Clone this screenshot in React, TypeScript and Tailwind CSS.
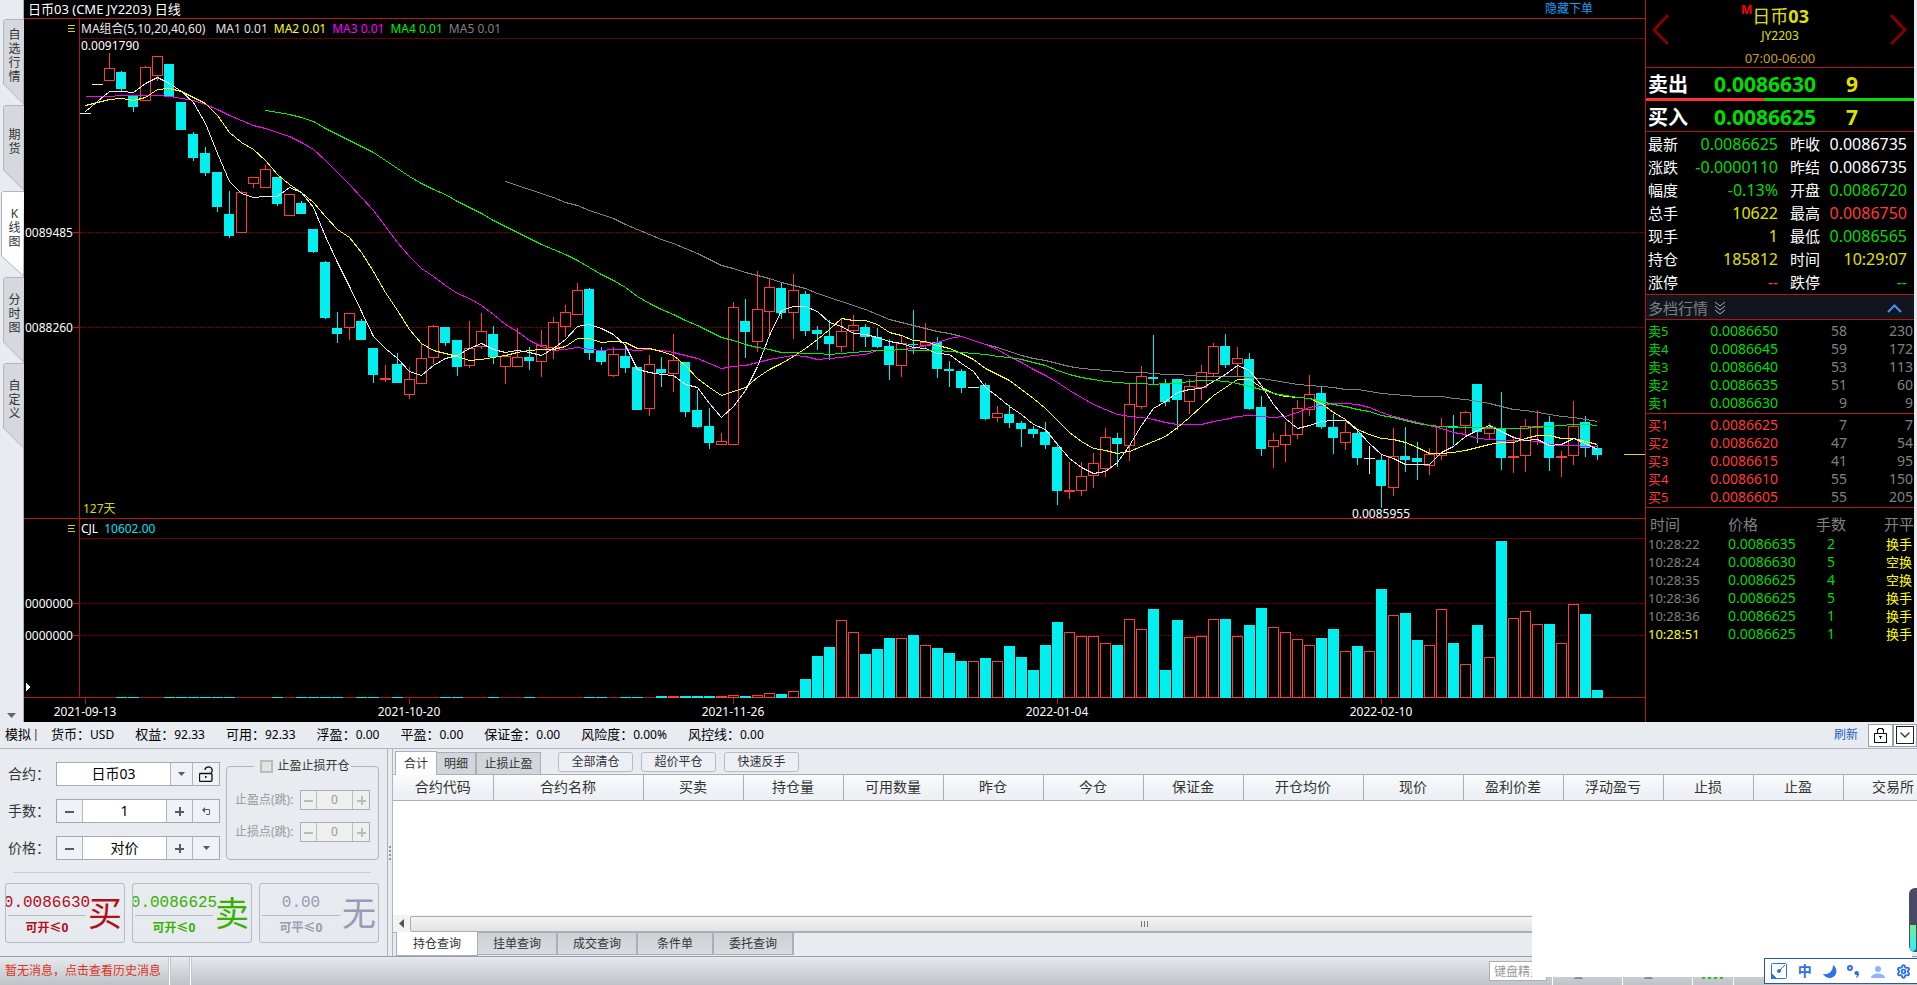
import React from 'react';
import { ChevronDown, Settings } from 'lucide-react';

type Kind = 'up' | 'down' | 'flat';
type Candle = [kind: Kind, high: number, top: number, bottom: number, low: number];

const STEP = 12;
const FIRST_X = 61;
const PRICE_TOP = 39;
const PRICE_HEIGHT = 479;
const VOLUME_HEIGHT = 159;

// u = rising, d = falling, f = unchanged; then high, body top, body bottom, low
const RAW = `f 113 113 113 113|f 84 84 84 84|u 53 68 80 80|d 71 72 89 91|d 95 96 107 112|u 66 67 100 100|u 56 56 75 81|d 64 64 97 97|d 102 102 130 130|d 132 134 158 161
d 147 153 173 176|d 172 172 207 212|d 191 214 236 238|u 191 192 232 232|u 177 177 183 188|u 165 169 187 187|d 177 177 204 206|u 194 194 215 215|d 201 203 214 214|d 229 229 252 253
d 261 262 318 319|d 312 328 334 343|u 313 313 327 340|d 319 321 340 340|d 348 348 375 383|u 365 378 379 382|d 353 364 383 383|u 367 379 394 399|u 343 358 383 383|u 325 326 357 364
d 327 327 343 346|d 340 340 367 376|u 321 348 365 368|u 313 331 346 349|d 326 334 357 364|u 356 356 366 384|u 328 357 366 366|d 347 357 361 370|u 330 345 361 377|u 317 322 347 359
u 305 312 326 337|u 283 290 314 314|d 288 289 353 360|d 347 351 362 365|u 347 354 375 377|d 344 356 368 373|d 367 367 410 410|u 355 364 408 416|d 357 369 373 387|u 334 360 373 392
d 362 362 412 417|d 390 410 427 428|d 408 426 443 449|u 433 441 444 444|u 302 307 444 444|d 299 321 332 358|u 271 309 341 352|u 278 287 311 335|d 283 288 313 319|u 274 290 312 339
d 291 294 331 336|d 326 330 334 350|d 320 336 344 360|u 319 331 346 352|u 315 325 330 351|d 324 327 337 347|d 328 337 347 348|d 339 346 365 380|u 335 343 365 377|d 310 344 345 354
u 323 342 345 348|d 337 342 369 378|d 361 369 371 387|d 369 371 388 393|f 387 387 387 387|d 383 385 419 420|u 406 413 417 422|d 405 414 423 428|d 421 423 429 447|d 426 429 434 438
d 422 432 445 449|d 443 447 491 505|u 462 490 491 499|u 462 476 490 496|u 453 463 475 488|u 428 437 468 477|d 433 438 444 467|u 384 404 445 461|u 366 376 406 409|d 335 377 379 384
d 379 383 402 406|d 379 379 400 430|u 379 386 401 414|u 365 372 387 400|u 343 346 373 376|d 334 346 365 368|u 347 358 363 376|d 353 359 409 410|d 396 407 449 456|u 433 440 446 468
u 422 435 444 462|u 400 408 434 439|u 375 394 409 416|d 387 393 427 429|d 414 427 438 454|u 422 432 442 450|d 430 433 458 465|f 446 458 458 474|d 454 460 486 508|u 428 456 487 496
d 427 456 460 472|d 442 458 462 480|u 448 454 465 475|u 418 426 455 460|d 415 426 427 445|u 411 412 425 436|d 384 384 432 443|u 423 428 433 439|d 392 428 458 470|u 436 456 457 473
u 419 426 455 472|u 410 426 427 445|d 416 422 458 471|u 451 456 457 477|u 401 426 455 465|d 416 422 448 457|d 445 448 455 460`;

const KINDS: Record<string, Kind> = { u: 'up', d: 'down', f: 'flat' };

const CANDLES: Candle[] = RAW.split(/[|\n]/).map((row) => {
  const [k, ...n] = row.trim().split(' ');
  return [KINDS[k], ...n.map(Number)] as Candle;
});

// Bar heights from VOLUME_START on; earlier ones are only a pixel high
const VOLUME_START = 48;
const VOLUMES = [
  1, 1, 1, 1, 1, 1, 2, 1, 2, 4, 3, 6, 18, 41, 50, 77, 65, 43, 48, 59, 59, 62, 52, 49, 44, 36, 36, 39, 36, 51, 40, 27, 52,
  75, 65, 61, 61, 54, 52, 78, 68, 88, 27, 77, 60, 61, 78, 78, 61, 72, 89, 70, 65, 58, 52, 59, 68, 46, 51, 46, 108, 82,
  84, 57, 52, 88, 54, 33, 72, 40, 156, 79, 86, 73, 73, 54, 93, 83, 7,
];

// Averages need bars older than the first one on screen, so each line is seeded
const AVERAGES = [
  { period: 60, start: 35, color: '#808080', seed: [181, 185, 189, 193, 197, 202, 205, 210, 214, 218, 224, 229, 234, 239, 243, 248, 253, 259, 265, 268, 272, 275, 278, 282] },
  { period: 20, start: 0, color: '#ff00ff', seed: [96, 96, 96, 95, 95, 95, 95, 96, 98, 100, 104, 109, 115, 120, 125, 128, 132, 136, 142] },
  { period: 10, start: 0, color: '#ffff00', seed: [105, 102, 99, 98, 100, 97, 89, 88, 91] },
  { period: 5, start: 0, color: '#e8e8e8', seed: [111, 101, 91, 91] },
  { period: 40, start: 15, color: '#00f000', seed: [110, 112, 114, 117, 121, 128, 134, 140, 146, 152, 160, 168, 176, 183, 189, 194, 201, 207, 213, 220, 226, 232, 238, 244] },
];

const CLOSES = CANDLES.map(([kind, , top, bottom]) => (kind === 'down' ? bottom : top));
const barX = (i: number) => FIRST_X + i * STEP;

const averagePoints = (period: number, start: number, seed: number[]) => {
  const points: string[] = [];
  for (let i = start; i < CLOSES.length; i++) {
    const y =
      i - start < seed.length
        ? seed[i - start]
        : CLOSES.slice(i - period + 1, i + 1).reduce((a, b) => a + b, 0) / period;
    points.push(`${barX(i)},${Math.round(y)}`);
  }
  return points.join(' ');
};

const CandleShape = ({ candle, x }: { candle: Candle; x: number }) => {
  const [kind, high, top, bottom, low] = candle;
  if (kind === 'down') {
    return (
      <g fill="#00f0f0">
        <rect x={x} y={high} width="1" height={low - high} />
        <rect x={x - 5} y={top} width="10" height={bottom - top} />
      </g>
    );
  }
  if (kind === 'flat') {
    return (
      <g fill="#e8e8e8">
        <rect x={x} y={high} width="1" height={low - high} />
        <rect x={x - 5} y={top} width="11" height="1" />
      </g>
    );
  }
  return (
    <g fill="#ff3a3a">
      <rect x={x} y={high} width="1" height={top - high} />
      <rect x={x} y={bottom} width="1" height={low - bottom} />
      <rect x={x - 4.5} y={top + 0.5} width="10" height={bottom - top} fill="none" stroke="#ff3a3a" />
    </g>
  );
};

const GridLine = ({ y, label }: { y: number; label: string }) => (
  <>
    <line x1="56" x2="100%" y1={y + 0.5} y2={y + 0.5} stroke="#700000" strokeDasharray="3 1" />
    <line x1="49" x2="56" y1={y + 0.5} y2={y + 0.5} stroke="#b81410" />
    <text x="49" y={y + 5} textAnchor="end" fill="#fff" fontSize="12">{label}</text>
  </>
);

const PricePane = () => (
  <svg className="block w-full overflow-visible" height={PRICE_HEIGHT} shapeRendering="crispEdges">
    <GridLine y={193} label="0089485" />
    <GridLine y={288} label="0088260" />
    <line x1="55.5" x2="55.5" y1="0" y2={PRICE_HEIGHT} stroke="#b81410" />
    <g transform={`translate(0 ${-PRICE_TOP})`}>
      {CANDLES.map((candle, i) => (
        <CandleShape key={i} candle={candle} x={barX(i)} />
      ))}
      {AVERAGES.map((a) => (
        <polyline key={a.period} points={averagePoints(a.period, a.start, a.seed)} fill="none" stroke={a.color} transform="translate(0.5 0.5)" />
      ))}
    </g>
    <text x="57" y="11" fill="#fff" fontSize="12">0.0091790</text>
    <text x={barX(108)} y="479" fill="#fff" fontSize="12" textAnchor="middle">0.0085955</text>
    <text x="59" y="474" fill="#d8d800" fontSize="12">127天</text>
    <svg x="100%" y="415" overflow="visible">
      <rect x="-21" width="21" height="1" fill="#e0e000" />
    </svg>
  </svg>
);

const VolumePane = () => (
  <svg className="block w-full" height={VOLUME_HEIGHT} shapeRendering="crispEdges">
    <GridLine y={64} label="0000000" />
    <GridLine y={96} label="0000000" />
    <line x1="55.5" x2="55.5" y1="0" y2="158" stroke="#b81410" />
    <line x1="0" x2="100%" y1="158.5" y2="158.5" stroke="#b81410" />
    {CANDLES.map(([kind], i) => {
      const height = i < VOLUME_START ? 0 : VOLUMES[i - VOLUME_START];
      const x = barX(i);
      return kind === 'down' ? (
        <rect key={i} x={x - 5} y={158 - height} width="11" height={height + 1} fill="#00f0f0" />
      ) : (
        <rect key={i} x={x - 4.5} y={158.5 - height} width="10" height={height} fill="#000" stroke="#ff3a3a" />
      );
    })}
    <path d="M2 144v8l5-4z" fill="#fff" />
  </svg>
);

const DATES = ['2021-09-13', '2021-10-20', '2021-11-26', '2022-01-04', '2022-02-10'];

const DateAxis = () => (
  <svg className="block w-full" height="24">
    {DATES.map((date, i) => (
      <g key={date}>
        <rect x={barX(i * 27)} width="1" height="6" fill="#b81410" />
        <text x={barX(i * 27)} y="18" fill="#fff" fontSize="12" textAnchor="middle">{date}</text>
      </g>
    ))}
  </svg>
);

const Bars = () => (
  <svg width="7" height="8" shapeRendering="crispEdges" fill="#d8d800">
    <rect width="7" height="1" />
    <rect y="3" width="6" height="1" />
    <rect y="6" width="7" height="1" />
  </svg>
);

const PaneHeader = ({ children }: { children: React.ReactNode }) => (
  <div className="flex h-5 items-stretch text-xs">
    <div className="flex w-14 shrink-0 items-center justify-end border-r border-[#b81410] pr-1">
      <Bars />
    </div>
    <div className="flex flex-1 items-center gap-1.5 whitespace-nowrap border-b border-[#6b0000] pl-px">{children}</div>
  </div>
);

const ChartSection = () => (
  <section className="min-w-0 flex-1 overflow-hidden bg-black text-white">
    <header className="flex h-[19px] items-center justify-between border-b border-[#b81410] pl-1 pr-13 text-xs">
      <h1 className="text-[13px] leading-4">日币03 (CME JY2203) 日线</h1>
      <a href="#order" className="text-[#1e9bf0]">隐藏下单</a>
    </header>
    <PaneHeader>
      <span className="mr-1 text-[#e8e8e8]">MA组合(5,10,20,40,60)</span>
      <span className="text-[#e0e0e0]">MA1 0.01</span>
      <span className="text-[#ffff00]">MA2 0.01</span>
      <span className="text-[#ff00ff]">MA3 0.01</span>
      <span className="text-[#00f000]">MA4 0.01</span>
      <span className="text-[#808080]">MA5 0.01</span>
    </PaneHeader>
    <PricePane />
    <div className="border-t border-[#b81410]">
      <PaneHeader>
        <span>CJL</span>
        <span className="text-[#00e0f0]">10602.00</span>
      </PaneHeader>
    </div>
    <VolumePane />
    <DateAxis />
  </section>
);

const SIDE_TABS = ['自选行情', '期货', 'K线图', '分时图', '自定义'];

const Sidebar = () => (
  <nav className="flex w-6 shrink-0 flex-col border-r border-[#a9b0ba] bg-[#e8ecf1] pt-[19px]">
    {SIDE_TABS.map((tab) => {
      const active = tab === 'K线图';
      return (
        <button key={tab} type="button" className="relative flex h-[86px] w-full items-center justify-center pb-3 pl-1.5 text-xs leading-[14px] text-[#333]">
          <svg className="absolute inset-0" width="24" height="86">
            <path
              d={active ? 'M24 .5H3L1.500 2V65L23 84.500' : 'M24 .5H5L3.500 2V65L23 84.500'}
              fill={active ? '#fff' : '#d5d8dd'}
              stroke="#b0b6be"
            />
          </svg>
          <span className="relative w-3 break-all text-center">{tab}</span>
        </button>
      );
    })}
    <svg className="mx-auto mt-auto mb-1" width="9" height="6"><path d="M0 1h9L4.500 6z" fill="#666" /></svg>
  </nav>
);

const GREEN = 'text-[#00dc00]';
const YELLOW = 'text-[#e0e000]';
const RED = 'text-[#ff3a3a]';

const STATS = [
  ['最新', '0.0086625', GREEN, '昨收', '0.0086735', 'text-white'],
  ['涨跌', '-0.0000110', GREEN, '昨结', '0.0086735', 'text-white'],
  ['幅度', '-0.13%', GREEN, '开盘', '0.0086720', GREEN],
  ['总手', '10622', YELLOW, '最高', '0.0086750', RED],
  ['现手', '1', YELLOW, '最低', '0.0086565', GREEN],
  ['持仓', '185812', YELLOW, '时间', '10:29:07', YELLOW],
  ['涨停', '--', RED, '跌停', '--', GREEN],
];

const SELLS = [
  ['卖5', '0.0086650', '58', '230'],
  ['卖4', '0.0086645', '59', '172'],
  ['卖3', '0.0086640', '53', '113'],
  ['卖2', '0.0086635', '51', '60'],
  ['卖1', '0.0086630', '9', '9'],
];

const BUYS = [
  ['买1', '0.0086625', '7', '7'],
  ['买2', '0.0086620', '47', '54'],
  ['买3', '0.0086615', '41', '95'],
  ['买4', '0.0086610', '55', '150'],
  ['买5', '0.0086605', '55', '205'],
];

const TRADES = [
  ['10:28:22', '0.0086635', '2', '换手'],
  ['10:28:24', '0.0086630', '5', '空换'],
  ['10:28:35', '0.0086625', '4', '空换'],
  ['10:28:36', '0.0086625', '5', '换手'],
  ['10:28:36', '0.0086625', '1', '换手'],
  ['10:28:51', '0.0086625', '1', '换手'],
];

const DepthTable = ({ rows, color }: { rows: string[][]; color: string }) => (
  <div className="border-b border-[#b81410] pt-0.5 pb-px">
    <table className="w-full table-fixed text-right text-sm">
      <tbody>
        {rows.map(([name, price, lots, total]) => (
          <tr key={name} className="h-[18px] leading-[18px] text-[#808080]">
            <th scope="row" className={`w-10 pl-0.5 text-left text-[13px] font-normal ${color}`}>{name}</th>
            <td className={`w-[92px] ${color}`}>{price}</td>
            <td className="w-[69px]">{lots}</td>
            <td className="pr-px">{total}</td>
          </tr>
        ))}
      </tbody>
    </table>
  </div>
);

const QuoteRow = ({ label, price, lots }: { label: string; price: string; lots: number }) => (
  <div className="flex h-[30px] items-center pl-0.5 pt-[3px] font-bold">
    <span className="w-[66px] text-xl text-white">{label}</span>
    <span className={`w-[132px] text-[21px] ${GREEN}`}>{price}</span>
    <span className={`text-[21px] ${YELLOW}`}>{lots}</span>
  </div>
);

const QuotePanel = () => (
  <aside className="w-[269px] shrink-0 overflow-hidden border-l border-[#b81410] bg-black">
    <header className="flex h-[68px] justify-between border-b border-[#b81410] px-1.5 pt-3.5">
      <button type="button" aria-label="上一个" className="h-8">
        <svg width="18" height="32" fill="none" stroke="#850000" strokeWidth="3"><path d="M16 1L2 16L16 30" /></svg>
      </button>
      <div className="-mt-2.5 flex flex-col items-center">
        <h2 className={`flex h-6 items-center pr-2.5 text-lg ${YELLOW}`}>
          <sup className="text-xs font-bold text-[#ff0000]">M</sup>日币<b>03</b>
        </h2>
        <p className={`h-4 text-xs leading-4 ${YELLOW}`}>JY2203</p>
        <p className="mt-1 text-[13px] leading-5 text-[#c8a028]">07:00-06:00</p>
      </div>
      <button type="button" aria-label="下一个" className="h-8">
        <svg width="18" height="32" fill="none" stroke="#850000" strokeWidth="3"><path d="M1 1L15 16L1 30" /></svg>
      </button>
    </header>
    <QuoteRow label="卖出" price="0.0086630" lots={9} />
    <div className="flex h-[3px]">
      <div className="w-[44%] bg-[#ff3030]" />
      <div className="flex-1 bg-[#00dc00]" />
    </div>
    <QuoteRow label="买入" price="0.0086625" lots={7} />
    <dl className="border-y border-[#b81410] pt-px text-base leading-[23px]">
      {STATS.map(([l1, v1, c1, l2, v2, c2]) => (
        <div key={l1} className="flex h-[23px] pl-0.5 pr-[7px]">
          <dt className="w-9 text-[15px] text-white">{l1}</dt>
          <dd className={`w-[94px] text-right ${c1}`}>{v1}</dd>
          <dt className="ml-3 w-9 text-[15px] text-white">{l2}</dt>
          <dd className={`flex-1 text-right ${c2}`}>{v2}</dd>
        </div>
      ))}
    </dl>
    <button type="button" className="flex h-[25px] w-full items-center border-b border-[#b81410] bg-[#11161e] pl-0.5 pr-3 pt-0.5 text-[15px] text-[#808080]">
      多档行情
      <svg className="ml-1.5" width="12" height="14" fill="none" stroke="#b0b0b0"><path d="M1 1l5 4l5-4M1 5l5 4l5-4M1 9l5 4l5-4" /></svg>
      <svg className="ml-auto" width="15" height="9" fill="none" stroke="#4a90f0" strokeWidth="2"><path d="M1 8l6.500-6.500L14 8" /></svg>
    </button>
    <DepthTable rows={SELLS} color={GREEN} />
    <DepthTable rows={BUYS} color={RED} />
    <table className="mt-[5px] w-full table-fixed text-left text-sm">
      <thead>
        <tr className="h-[22px] text-[15px] leading-5 text-[#808080]">
          <th className="w-[82px] pl-1 font-normal">时间</th>
          <th className="w-[68px] font-normal">价格</th>
          <th className="w-[70px] text-center font-normal">手数</th>
          <th className="text-right font-normal">开平</th>
        </tr>
      </thead>
      <tbody>
        {TRADES.map(([time, price, lots, type], i) => (
          <tr key={i} className={`h-[18px] leading-[18px] ${GREEN}`}>
            <td className={`pl-0.5 text-[13px] ${i === TRADES.length - 1 ? 'text-[#ffff00]' : 'text-[#808080]'}`}>{time}</td>
            <td>{price}</td>
            <td className="text-center">{lots}</td>
            <td className="pr-0.5 text-right text-[13px] text-[#ffff00]">{type}</td>
          </tr>
        ))}
      </tbody>
    </table>
  </aside>
);

const ACCOUNT = [
  ['货币', 'USD'],
  ['权益', '92.33'],
  ['可用', '92.33'],
  ['浮盈', '0.00'],
  ['平盈', '0.00'],
  ['保证金', '0.00'],
  ['风险度', '0.00%'],
  ['风控线', '0.00'],
];

const LockIcon = () => (
  <svg width="13" height="16" fill="none" stroke="#111" shapeRendering="crispEdges">
    <path d="M1 6.500h11l.5.5v8l-.5.5H1l-.5-.5V7zM3.500 6V3l2-2h2l2 2v3" />
    <path d="M5 9h3v1H7v2H6v-2H5z" fill="#111" stroke="none" />
  </svg>
);

const LockOpenIcon = () => (
  <svg width="15" height="16" fill="none" stroke="#111">
    <path d="M1 7.500h11l1 1v6l-1 1H1l-.5-1v-6z" strokeWidth="1.300" />
    <path d="M6 4c0-2 2-3.200 4-3.200c2 .2 3.500 2 3.200 3.700c0 1-.7 2-1.200 3" strokeWidth="1.300" />
    <path d="M6 10h1.500v2H6z" fill="#111" stroke="none" />
  </svg>
);

const AccountBar = () => (
  <div className="flex h-[27px] items-center border-b border-[#b0b5bd] text-[13px] text-black">
    <span className="pl-[5px]">模拟</span>
    <span className="ml-1 mr-3.5 h-3 w-0.5 border-l border-[#5a8ab8] bg-[#e0a050]" />
    <dl className="flex gap-[21px]">
      {ACCOUNT.map(([label, value]) => (
        <div key={label} className="flex items-center">
          <dt>{label}：</dt>
          <dd className="text-xs">{value}</dd>
        </div>
      ))}
    </dl>
    <a href="#refresh" className="ml-auto mr-2.5 text-xs text-[#1f5fc0]">刷新</a>
    <button type="button" aria-label="锁定" className="flex h-[23px] w-[25px] items-center justify-center border border-[#9aa0aa] bg-white">
      <LockIcon />
    </button>
    <button type="button" aria-label="收起" className="flex h-[23px] w-6 items-center justify-center border border-[#9aa0aa] bg-white">
      <span className="flex size-[18px] items-center justify-center border border-[#222]"><ChevronDown size={18} strokeWidth={2} color="#333" /></span>
    </button>
  </div>
);

const BTN = 'flex items-center justify-center bg-[#eff2f6] text-[#555]';

const Caret = () => (
  <svg width="7" height="4"><path d="M0 0h7L3.500 4z" fill="#555b66" /></svg>
);

const Sign = ({ plus, color = '#555b66' }: { plus?: boolean; color?: string }) => (
  <svg width="9" height="9" fill={color}>
    <rect y="4" width="9" height="2" />
    {plus && <rect x="4" width="2" height="9" />}
  </svg>
);

const Stepper = ({ id, label, value, children }: { id: string; label: string; value: string; children: React.ReactNode }) => (
  <div className="flex h-6 items-center">
    <label htmlFor={id} className="w-12 text-sm">{label}：</label>
    <div className="flex h-6 w-[164px] divide-x divide-[#b0b5bd] border border-[#a4a9b2]">
      <button type="button" aria-label="减" className={`${BTN} w-[26px]`}><Sign /></button>
      <input id={id} defaultValue={value} className="w-0 flex-1 bg-white text-center text-sm text-black" />
      <button type="button" aria-label="加" className={`${BTN} w-[26px]`}><Sign plus /></button>
      <button type="button" aria-label={`${label}选项`} className={`${BTN} w-[26px]`}>{children}</button>
    </div>
  </div>
);

const StopStepper = ({ id, label }: { id: string; label: string }) => (
  <div className="flex items-center justify-between text-xs text-[#999]">
    <label htmlFor={id}>{label}(跳):</label>
    <div className="flex h-5 w-[70px] divide-x divide-[#b8bcc4] border border-[#a9aeb8] bg-[#efefef]">
      <button type="button" disabled aria-label="减" className="flex w-4 items-center justify-center"><Sign color="#bbb" /></button>
      <input id={id} disabled defaultValue="0" className="w-0 flex-1 text-center text-xs" />
      <button type="button" disabled aria-label="加" className="flex w-4 items-center justify-center"><Sign plus color="#bbb" /></button>
    </div>
  </div>
);

const ORDERS = [
  { price: '0.0086630', hint: '可开≤0', word: '买', color: 'text-[#b01018]' },
  { price: '0.0086625', hint: '可开≤0', word: '卖', color: 'text-[#38b000]' },
  { price: '0.00', hint: '可平≤0', word: '无', color: 'text-[#9a9ab4]' },
];

const OrderPanel = () => (
  <form className="w-[388px] shrink-0 border-r border-[#b0b5bd] pl-[5px] pr-2 pt-[13px] text-[#333]">
    <div className="flex gap-1.5">
      <div className="flex flex-col gap-[13px] pl-[3px]">
        <div className="flex h-6 items-center">
          <label htmlFor="contract" className="w-12 text-sm">合约：</label>
          <div className="flex h-6 w-[164px] divide-x divide-[#b0b5bd] border border-[#a4a9b2]">
            <input id="contract" defaultValue="日币03" className="w-0 flex-1 bg-white text-center text-sm text-black" />
            <button type="button" aria-label="选择合约" className={`${BTN} w-[22px]`}><Caret /></button>
            <button type="button" aria-label="锁定合约" className={`${BTN} w-[26px]`}><LockOpenIcon /></button>
          </div>
        </div>
        <Stepper id="lots" label="手数" value="1">
          <svg width="9" height="9" fill="none" stroke="#555b66">
            <path d="M3 0v6L0 3z" fill="#555b66" stroke="none" />
            <path d="M2 2.500h5.500v5H4" />
          </svg>
        </Stepper>
        <Stepper id="price" label="价格" value="对价"><Caret /></Stepper>
      </div>
      <fieldset className="-mt-1.5 h-[104px] flex-1 rounded-sm border border-[#b0b5bd] px-2">
        <legend className="mx-auto flex h-5 items-center gap-1 pl-1.5 pr-px text-xs">
          <input id="stop" type="checkbox" className="size-[13px] appearance-none border-2 border-[#b8bcc4] bg-[#e6e3df]" />
          <label htmlFor="stop">止盈止损开仓</label>
        </legend>
        <div className="flex flex-col gap-3 pt-3.5">
          <StopStepper id="profit" label="止盈点" />
          <StopStepper id="loss" label="止损点" />
        </div>
      </fieldset>
    </div>
    <hr className="mx-2 mt-3 border-[#c9cdd3]" />
    <div className="mt-2.5 flex gap-[7px]">
      {ORDERS.map(({ price, hint, word, color }) => (
        <button key={word} type="button" className={`flex h-[60px] w-[120px] items-center overflow-hidden rounded-[3px] border border-[#b6bbc3] bg-linear-to-b from-[#e8ecf1] to-[#e6e9ee] ${color}`}>
          <span className="flex w-[82px] shrink-0 flex-col items-center pt-1">
            <span className="flex w-[78px] justify-center border-b border-[#b6bbc3] font-['Liberation_Mono',monospace] text-base leading-6">{price}</span>
            <span className="text-xs font-bold leading-6">{hint}</span>
          </span>
          <span className="text-[34px] leading-10">{word}</span>
        </button>
      ))}
    </div>
  </form>
);

const COLUMNS: [string, string][] = [
  ['合约代码', 'w-[100px]'],
  ['合约名称', 'w-[150px]'],
  ['买卖', 'w-[100px]'],
  ['持仓量', 'w-[100px]'],
  ['可用数量', 'w-[100px]'],
  ['昨仓', 'w-[100px]'],
  ['今仓', 'w-[100px]'],
  ['保证金', 'w-[100px]'],
  ['开仓均价', 'w-[120px]'],
  ['现价', 'w-[100px]'],
  ['盈利价差', 'w-[100px]'],
  ['浮动盈亏', 'w-[100px]'],
  ['止损', 'w-[90px]'],
  ['止盈', 'w-[90px]'],
  ['交易所', 'w-[100px]'],
];

const QUERY_TABS = ['挂单查询', '成交查询', '条件单', '委托查询'];

const PositionPanel = () => (
  <section className="flex min-w-0 flex-1 flex-col border-l border-[#b0b5bd]">
    <div className="flex h-[25px] items-end text-xs text-[#333]">
      <button type="button" className="relative -mb-px ml-0.5 h-6 w-[42px] border border-b-0 border-[#a9aeb8] bg-white">合计</button>
      <button type="button" className="h-[22px] w-10 border-r-2 border-t border-[#a9aeb8] bg-[#d2d6da]">明细</button>
      <button type="button" className="h-[22px] w-16 border-r border-t border-[#a9aeb8] bg-[#d2d6da]">止损止盈</button>
      <div className="mb-0.5 ml-[17px] flex gap-2">
        {['全部清仓', '超价平仓', '快速反手'].map((name) => (
          <button key={name} type="button" className="h-5 w-[75px] rounded-[3px] border border-[#b6bbc3] bg-[#eceff3]">{name}</button>
        ))}
      </div>
    </div>
    <div className="flex-1 overflow-hidden border-t border-[#a9aeb8] bg-white">
      <table className="w-[1550px] table-fixed text-sm text-[#333]">
        <thead>
          <tr className="h-[25px] bg-linear-to-b from-[#f8fafb] to-[#eceff3]">
            {COLUMNS.map(([name, width]) => (
              <th key={name} className={`border-b border-r border-[#a9aeb8] p-0 font-normal ${width}`}>{name}</th>
            ))}
          </tr>
        </thead>
      </table>
    </div>
    <div className="flex h-[17px] items-center bg-[#f2f2f2] pl-1.5">
      <svg width="5" height="9"><path d="M5 0v9L0 4.500z" fill="#555" /></svg>
      <div className="ml-1.5 flex h-4 flex-1 items-center rounded-xs border border-[#a9aeb0] bg-linear-to-b from-[#f2f3f2] to-[#e2e3e2] pl-[730px]">
        <svg width="7" height="6" fill="#777"><path d="M0 0h1v6H0zM3 0h1v6H3zM6 0h1v6H6z" /></svg>
      </div>
    </div>
    <div className="flex h-6 items-start border-t border-[#a9aeb8] pl-[3px] text-xs text-[#333]">
      <button type="button" className="-mt-px h-6 w-[82px] border border-t-0 border-[#a9aeb8] bg-white">持仓查询</button>
      {QUERY_TABS.map((tab) => (
        <button
          key={tab}
          type="button"
          className={`h-[22px] border-b border-r-2 border-[#a9aeb8] bg-linear-to-b from-[#cdd1d6] to-[#d8dce1] ${tab === '条件单' ? 'w-[76px]' : 'w-20'}`}
        >
          {tab}
        </button>
      ))}
    </div>
  </section>
);

const Separator = () => <span className="h-full w-[3px] border-x border-[#c4c8cd] bg-white" />;

const ServerIcon = () => (
  <span className="flex h-full w-[67px] items-end pb-1.5 pl-5">
    <svg width="9" height="11" fill="none" stroke="#8a8e94"><path d="M1.500 4.500h6v5h-6zM0 10.500h9" /></svg>
  </span>
);

const StatusBar = () => (
  <footer className="flex h-[29px] items-center border-t border-[#989ea8] bg-linear-to-b from-[#e6e9ed] to-[#bfc3c8] text-xs">
    <a href="#messages" className="w-[168px] pl-[5px] text-[#e03020]">暂无消息，点击查看历史消息</a>
    <Separator />
    <span className="w-[18px]" />
    <Separator />
    <input aria-label="键盘精灵" placeholder="键盘精灵" className="ml-auto mr-1 h-5 w-[58px] border border-[#a9aeb8] bg-white pl-1 placeholder:text-[#999]" />
    <Separator />
    <ServerIcon />
    <Separator />
    <ServerIcon />
    <Separator />
    <svg className="ml-2 mr-1 self-end" width="26" height="8" fill="#38c018"><path d="M0 0h3v2H0zM6 0h3v2H6zM12 0h3v2h-3zM18 0h3v2h-3z" /></svg>
    <Separator />
    <span className="w-[182px]" />
  </footer>
);

const InputMethodBar = () => (
  <div className="absolute bottom-px right-0 flex h-[26px] w-[153px] items-center justify-between border border-r-0 border-[#2f54a8] bg-white pl-1.5 pr-1.5 text-[#2f6fee]">
    <svg width="16" height="16" fill="none" stroke="currentColor">
      <rect x=".5" y=".5" width="15" height="15" rx="1" />
      <path d="M0 10l6 6H0z" fill="currentColor" />
      <circle cx="8" cy="8" r="1.500" fill="currentColor" />
      <path d="M8 8l6-6" />
    </svg>
    <span className="text-sm font-bold">中</span>
    <svg width="14" height="13" fill="currentColor"><path d="M10 0c5 3 5 12-3 13c-3 0-6-2-7-4c6 1 10-3 10-9z" /></svg>
    <svg width="13" height="13"><circle cx="3" cy="3" r="2" fill="none" stroke="currentColor" strokeWidth="2" /><path d="M9 6a2.500 2.500 0 0 1 3 2.500c0 2-1 4-3 4.500l1-3a2 2 0 0 1-1-4z" fill="currentColor" /></svg>
    <svg width="14" height="13" fill="#8fb4ff"><circle cx="7" cy="4" r="3" /><path d="M0 13c0-6 14-6 14 0z" /></svg>
    <Settings size={15} strokeWidth={3} />
  </div>
);

export default function App() {
  return (
    <div className="relative flex min-h-screen flex-col overflow-hidden bg-[#e8ebf0] font-['Noto_Sans','Noto_Sans_CJK_SC',sans-serif]">
      <main className="flex pr-[3px]">
        <Sidebar />
        <ChartSection />
        <QuotePanel />
      </main>
      <AccountBar />
      <div id="order" className="flex flex-1">
        <OrderPanel />
        <div className="flex w-1 items-center justify-center">
          <svg width="2" height="14" fill="#8f96a2"><path d="M0 0h2v2H0zM0 4h2v2H0zM0 8h2v2H0zM0 12h2v2H0z" /></svg>
        </div>
        <PositionPanel />
      </div>
      <StatusBar />
      <div className="absolute bottom-2 right-[5px] h-[62px] w-[380px] bg-white" />
      <div className="absolute bottom-[33px] right-0 flex h-16 w-2 flex-col justify-end overflow-hidden rounded-l-md bg-[#4b4a66] p-px">
        <div className="h-[26px] rounded-b-md bg-linear-to-b from-[#6cf08c] to-[#20f0f8]" />
      </div>
      <InputMethodBar />
    </div>
  );
}
